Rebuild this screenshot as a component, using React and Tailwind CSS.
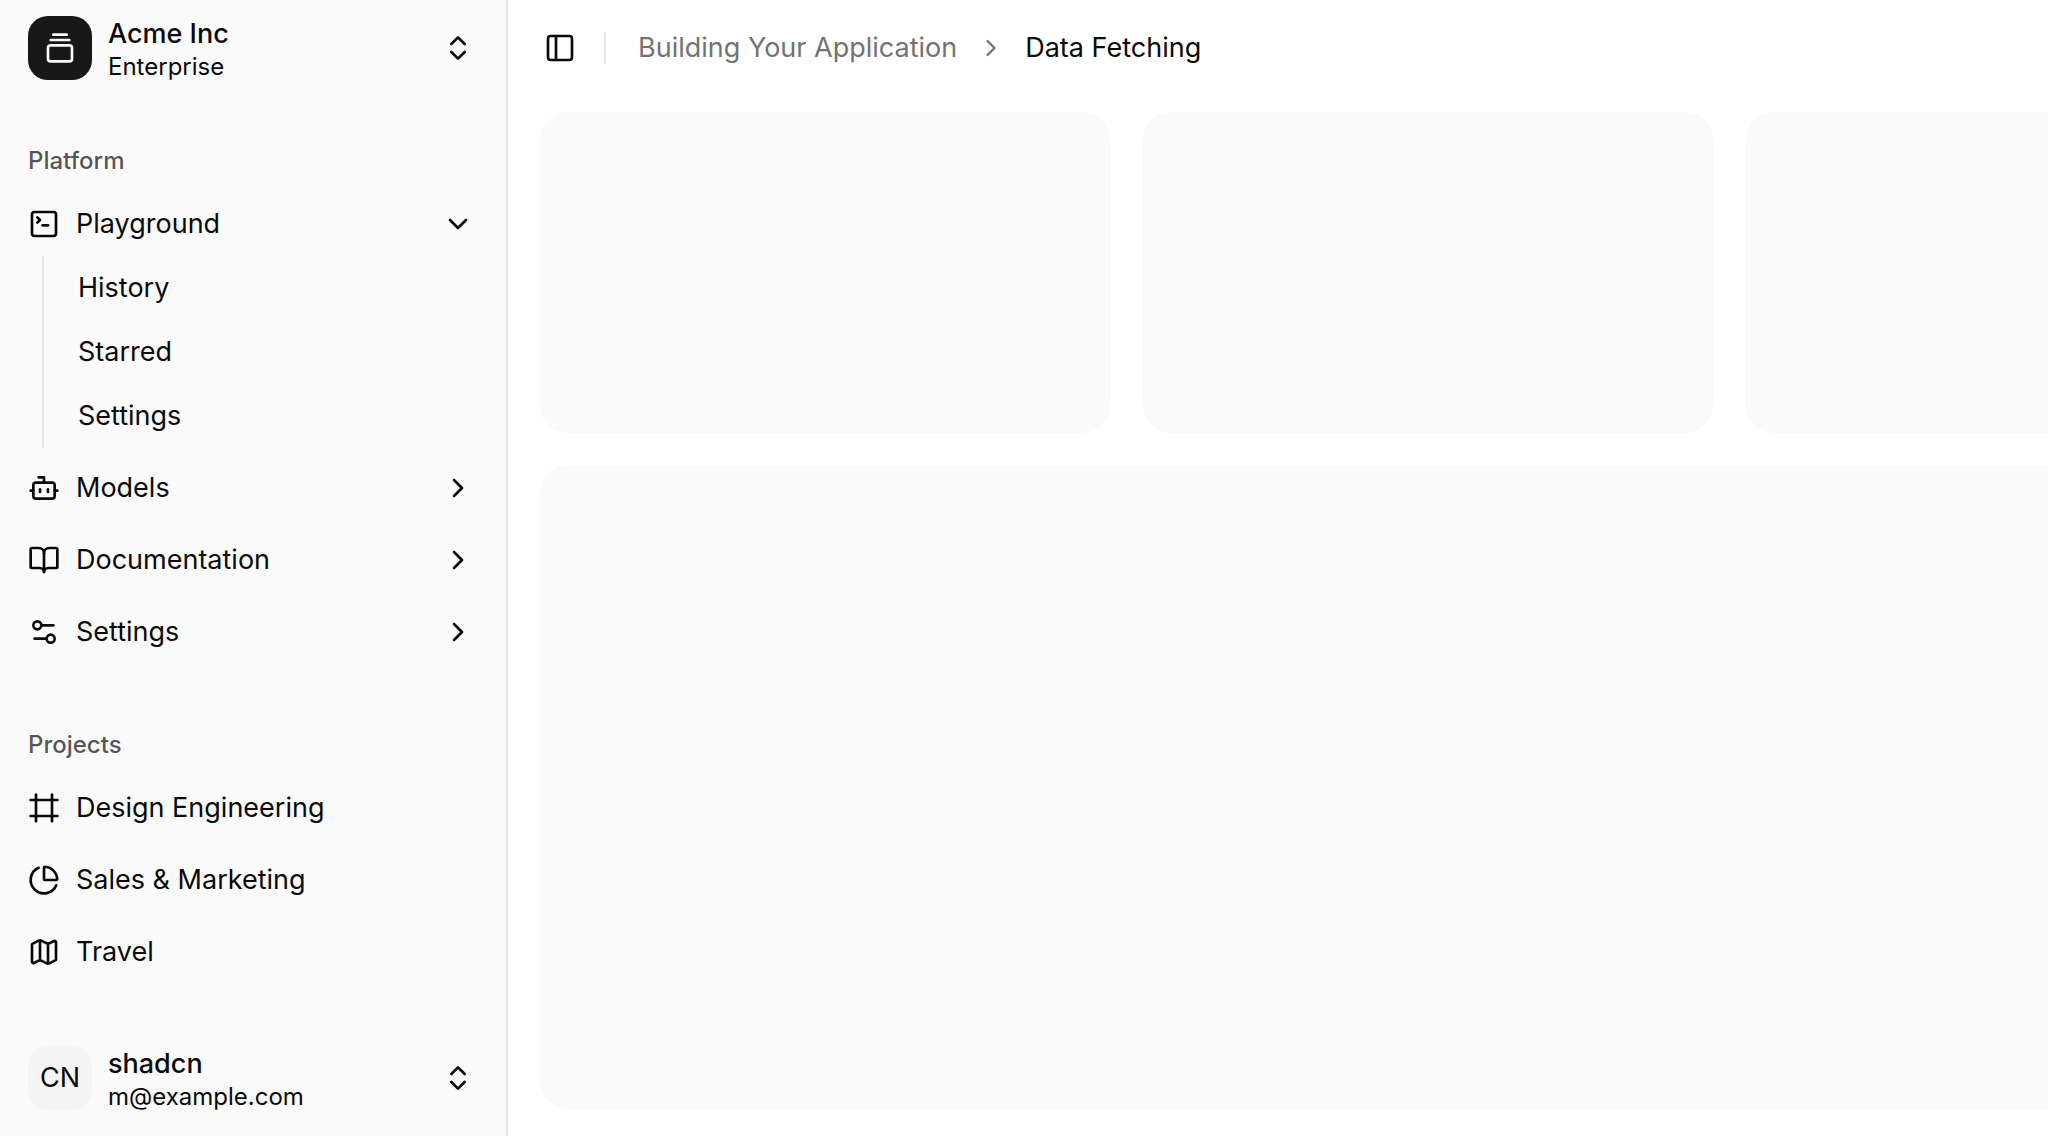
import { useState } from "react";
import {
  BookOpen,
  Bot,
  ChevronRight,
  ChevronsUpDown,
  Frame,
  GalleryVerticalEnd,
  Map,
  PanelLeft,
  PieChart,
  Settings2,
  SquareTerminal,
} from "lucide-react";

const platform = [
  {
    title: "Playground",
    icon: SquareTerminal,
    open: true,
    items: ["History", "Starred", "Settings"],
  },
  { title: "Models", icon: Bot, items: ["Genesis", "Explorer", "Quantum"] },
  {
    title: "Documentation",
    icon: BookOpen,
    items: ["Introduction", "Get Started", "Tutorials", "Changelog"],
  },
  {
    title: "Settings",
    icon: Settings2,
    items: ["General", "Team", "Billing", "Limits"],
  },
];

const projects = [
  { title: "Design Engineering", icon: Frame },
  { title: "Sales & Marketing", icon: PieChart },
  { title: "Travel", icon: Map },
];

const NavItem = ({ item }) => {
  const [open, setOpen] = useState(!!item.open);
  const Icon = item.icon;

  return (
    <li>
      <button
        type="button"
        aria-expanded={open}
        onClick={() => setOpen(!open)}
        className="flex w-full h-16 items-center gap-4 px-4 rounded-2xl text-left hover:bg-neutral-100 cursor-pointer"
      >
        <Icon className="size-8 shrink-0" />
        <span className="truncate">{item.title}</span>
        <ChevronRight
          className={open ? "ml-auto size-8 rotate-90" : "ml-auto size-8"}
        />
      </button>
      {open && (
        <ul className="flex flex-col gap-2 ml-[30px] mr-7 py-1 pl-[18px] border-l-2 border-neutral-200">
          {item.items.map((title) => (
            <li key={title}>
              <a
                href="#"
                className="flex h-14 items-center px-4 rounded-2xl hover:bg-neutral-100"
              >
                {title}
              </a>
            </li>
          ))}
        </ul>
      )}
    </li>
  );
};

const NavGroup = ({ label, children }) => (
  <nav aria-label={label} className="py-4">
    <h2 className="flex h-16 items-center px-4 pt-0.5 text-2xl font-medium text-neutral-950/70">
      {label}
    </h2>
    <ul className="flex flex-col gap-2">{children}</ul>
  </nav>
);

const AccountButton = ({ badge, title, subtitle }) => (
  <button
    type="button"
    className="flex w-full h-24 items-center gap-4 px-4 rounded-2xl text-left hover:bg-neutral-100 cursor-pointer"
  >
    {badge}
    <span className="flex flex-1 flex-col pt-0.5">
      <span className="truncate font-medium leading-[35px]">{title}</span>
      <span className="truncate text-2xl">{subtitle}</span>
    </span>
    <ChevronsUpDown className="size-8" />
  </button>
);

const Sidebar = () => (
  <aside className="flex w-[508px] shrink-0 flex-col pl-3 pr-4 pb-2.5 bg-neutral-50 border-r-2 border-neutral-200">
    <div className="pb-4">
      <AccountButton
        title="Acme Inc"
        subtitle="Enterprise"
        badge={
          <span className="flex size-16 items-center justify-center rounded-[20px] bg-neutral-900 text-neutral-50">
            <GalleryVerticalEnd className="size-8" />
          </span>
        }
      />
    </div>
    <div className="flex flex-1 flex-col gap-4">
      <NavGroup label="Platform">
        {platform.map((item) => (
          <NavItem key={item.title} item={item} />
        ))}
      </NavGroup>
      <NavGroup label="Projects">
        {projects.map(({ title, icon: Icon }) => (
          <li key={title}>
            <a
              href="#"
              className="flex h-16 items-center gap-4 px-4 rounded-2xl hover:bg-neutral-100"
            >
              <Icon className="size-8 shrink-0" />
              <span className="truncate">{title}</span>
            </a>
          </li>
        ))}
      </NavGroup>
    </div>
    <AccountButton
      title="shadcn"
      subtitle="m@example.com"
      badge={
        <span className="flex size-16 items-center justify-center rounded-[20px] bg-neutral-100">
          CN
        </span>
      }
    />
  </aside>
);

export default function App() {
  const [sidebar, setSidebar] = useState(true);

  return (
    <div className="flex min-h-screen overflow-hidden bg-white font-[Inter,sans-serif] text-[27px] leading-10 text-neutral-950">
      {sidebar && <Sidebar />}
      <main className="flex min-w-0 flex-1 flex-col overflow-hidden">
        <header className="flex h-24 shrink-0 items-center gap-4 px-6">
          <button
            type="button"
            aria-label="Toggle Sidebar"
            onClick={() => setSidebar(!sidebar)}
            className="flex size-14 items-center justify-center rounded-2xl hover:bg-neutral-100 cursor-pointer"
          >
            <PanelLeft className="size-8" />
          </button>
          <div className="mr-4 h-8 w-0.5 bg-neutral-200" />
          <nav aria-label="Breadcrumb">
            <ol className="flex items-center gap-5 text-neutral-500">
              <li>
                <a href="#" className="hover:text-neutral-950">
                  Building Your Application
                </a>
              </li>
              <li aria-hidden="true">
                <ChevronRight className="size-7" />
              </li>
              <li aria-current="page" className="text-neutral-950">
                Data Fetching
              </li>
            </ol>
          </nav>
        </header>
        {/* panels keep their desktop width and run off the right edge */}
        <div className="flex min-w-[1840px] flex-1 flex-col gap-8 px-8 pt-4 pb-[27px]">
          <div className="grid grid-cols-3 gap-8">
            <div className="aspect-video rounded-[28px] bg-neutral-50" />
            <div className="aspect-video rounded-[28px] bg-neutral-50" />
            <div className="aspect-video rounded-[28px] bg-neutral-50" />
          </div>
          <div className="flex-1 rounded-[28px] bg-neutral-50" />
        </div>
      </main>
    </div>
  );
}
